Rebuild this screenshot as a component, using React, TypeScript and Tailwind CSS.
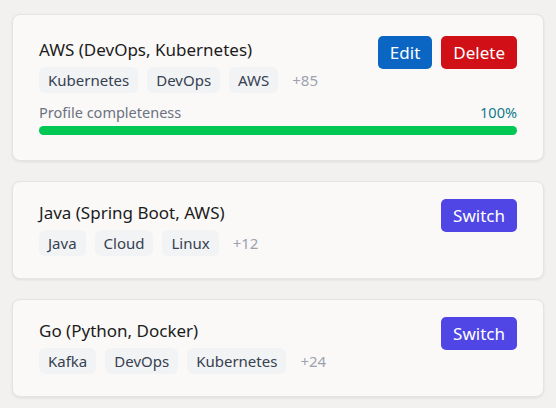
import React from "react";

type CardProps = {
  title: string;
  tags: string[];
  more: string;
  active?: boolean;
};

function Tag({ label }: { label: string }) {
  return (
    <span className="flex h-[26px] items-center rounded-md bg-[#f1f3f5] px-[9px] text-[15px] text-[#374151]">
      {label}
    </span>
  );
}

function Card({ title, tags, more, active }: CardProps) {
  return (
    <div
      className={`rounded-lg border border-[#e5e4e2] bg-[#faf9f8] px-[26px] shadow-[0_1px_3px_rgba(0,0,0,0.08)] ${
        active ? "pt-[21px] pb-[25px]" : "pt-[17px] pb-[22px]"
      }`}
    >
      <div className="flex items-start justify-between">
        <div className="flex flex-col">
          <div className="text-[17px] leading-[27px] text-[#1c1c1c]">{title}</div>
          <div className="mt-[4px] flex items-center gap-[9px]">
            {tags.map((t) => (
              <Tag key={t} label={t} />
            ))}
            <span className="ml-[5px] text-[15px] text-[#9ca3af]">{more}</span>
          </div>
        </div>
        {active ? (
          <div className="flex gap-[9px]">
            <button className="h-[33px] rounded-[5px] bg-[#0a66c2] px-[12px] text-[17px] text-white">
              Edit
            </button>
            <button className="h-[33px] rounded-[5px] bg-[#d00f17] px-[12px] text-[17px] text-white">
              Delete
            </button>
          </div>
        ) : (
          <button className="h-[33px] rounded-[5px] bg-[#4f46e5] px-[12px] text-[17px] text-white">
            Switch
          </button>
        )}
      </div>
      {active && (
        <div className="mt-[8px]">
          <div className="flex items-center justify-between text-[14.5px] leading-[22px]">
            <span className="text-[#6b7280]">Profile completeness</span>
            <span className="text-[#117a8b]">100%</span>
          </div>
          <div className="mt-[3px] h-[9px] w-full rounded-full bg-[#e5e7eb]">
            <div className="h-full rounded-full bg-[#00c853]" style={{ width: "100%" }} />
          </div>
        </div>
      )}
    </div>
  );
}

export default function App() {
  return (
    <div
      className="flex min-h-screen flex-col gap-[20px] bg-[#f2f1ef] px-[12px] pt-[14px]"
      style={{ fontFamily: '"Segoe UI", "Noto Sans", sans-serif' }}
    >
      <Card
        title="AWS (DevOps, Kubernetes)"
        tags={["Kubernetes", "DevOps", "AWS"]}
        more="+85"
        active
      />
      <Card title="Java (Spring Boot, AWS)" tags={["Java", "Cloud", "Linux"]} more="+12" />
      <Card title="Go (Python, Docker)" tags={["Kafka", "DevOps", "Kubernetes"]} more="+24" />
    </div>
  );
}
